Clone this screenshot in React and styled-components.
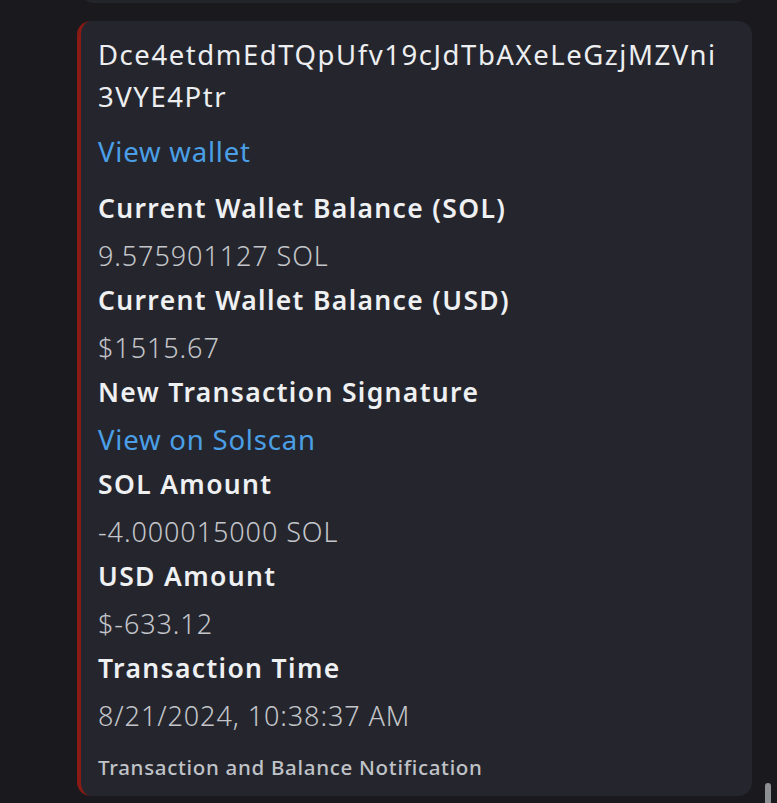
import React from "react";
import styled, { createGlobalStyle } from "styled-components";

const Global = createGlobalStyle`
  html, body { margin: 0; padding: 0; background: #1a1a1e; }
  body { width: 777px; height: 803px; overflow: hidden; }
  #root { width: 777px; height: 803px; }
`;

const Page = styled.div`
  position: relative;
  width: 777px;
  height: 803px;
  background: #1a1a1e;
  display: flex;
  flex-direction: column;
  gap: 18px;
  padding: 0 25px 0 77px;
  box-sizing: border-box;
  font-family: "Noto Sans", "Open Sans", sans-serif;
  overflow: hidden;
`;

const PrevCard = styled.div`
  margin-top: -30px;
  height: 33px;
  margin-left: 3px;
  margin-right: 4px;
  background: #24252b;
  border-radius: 0 0 14px 14px;
  flex: none;
`;

const Card = styled.div`
  flex: none;
  background: #25262d;
  border-left: 4px solid #8a1a14;
  border-radius: 14px;
  padding: 13px 20px 14px 17px;
`;

const Title = styled.div`
  color: #eceef0;
  font-size: 27.5px;
  line-height: 42px;
  font-weight: 400;
  letter-spacing: 1.55px;
  word-break: break-all;
  width: 632px;
`;

const Link = styled.a`
  display: block;
  color: #4a9fe6;
  text-decoration: none;
  font-size: 27.5px;
  line-height: 44px;
  letter-spacing: 0.8px;
  margin-top: ${(p) => p.$mt || 0}px;
`;

const Name = styled.div`
  color: #eef0f2;
  font-size: 26.5px;
  line-height: 44px;
  font-weight: 600;
  letter-spacing: 1.35px;
  margin-top: ${(p) => p.$mt || 0}px;
`;

const Value = styled.div`
  color: #c3c5ca;
  font-size: 27px;
  line-height: 44px;
  font-weight: 300;
  letter-spacing: 0.9px;
  margin-top: 4px;
`;

const Footer = styled.div`
  color: #c0c3c8;
  font-size: 20.5px;
  line-height: 30px;
  font-weight: 500;
  letter-spacing: 0.7px;
  margin-top: 14px;
`;

const Scroll = styled.div`
  position: absolute;
  left: 765px;
  top: 783px;
  width: 6px;
  height: 40px;
  border-radius: 3px;
  background: #8e8f93;
`;

const fields = [
  { name: "Current Wallet Balance (SOL)", value: "9.575901127 SOL" },
  { name: "Current Wallet Balance (USD)", value: "$1515.67" },
  { name: "New Transaction Signature", link: "View on Solscan" },
  { name: "SOL Amount", value: "-4.000015000 SOL" },
  { name: "USD Amount", value: "$-633.12" },
  { name: "Transaction Time", value: "8/21/2024, 10:38:37 AM" },
];

export default function App() {
  return (
    <>
      <Global />
      <Page>
        <PrevCard />
        <Card>
          <Title>Dce4etdmEdTQpUfv19cJdTbAXeLeGzjMZVni3VYE4Ptr</Title>
          <Link $mt={12}>View wallet</Link>
          {fields.map((f, i) => (
            <React.Fragment key={f.name}>
              <Name $mt={i === 0 ? 12 : 0}>{f.name}</Name>
              {f.link ? <Link $mt={4}>{f.link}</Link> : <Value>{f.value}</Value>}
            </React.Fragment>
          ))}
          <Footer>Transaction and Balance Notification</Footer>
        </Card>
        <Scroll />
      </Page>
    </>
  );
}
